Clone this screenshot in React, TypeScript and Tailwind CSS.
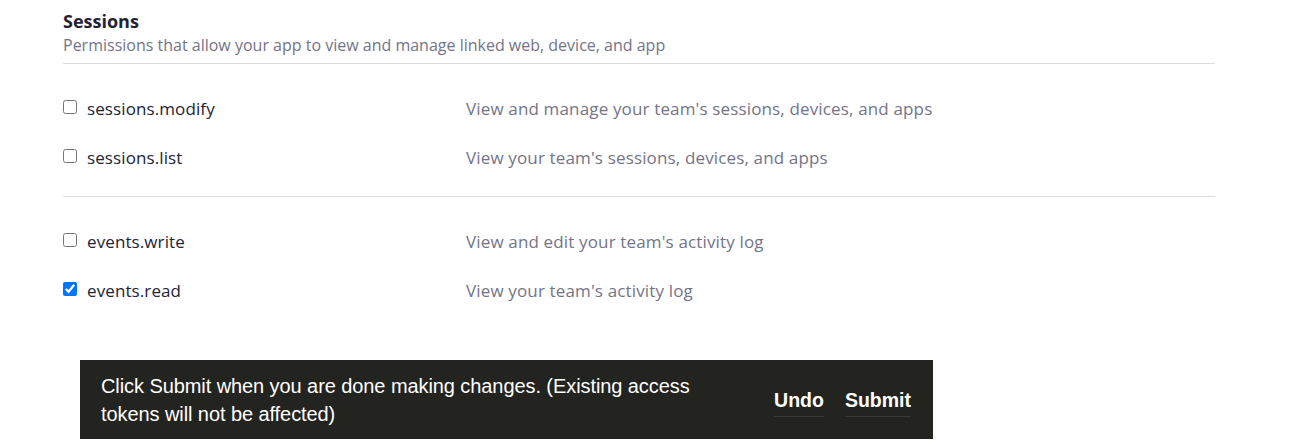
import React, { useState } from "react";

type Perm = { name: string; desc: string; checked: boolean };

const groups: Perm[][] = [
  [
    { name: "sessions.modify", desc: "View and manage your team's sessions, devices, and apps", checked: false },
    { name: "sessions.list", desc: "View your team's sessions, devices, and apps", checked: false },
  ],
  [
    { name: "events.write", desc: "View and edit your team's activity log", checked: false },
    { name: "events.read", desc: "View your team's activity log", checked: true },
  ],
];

function Row({ p }: { p: Perm }) {
  const [c, setC] = useState(p.checked);
  return (
    <div className="flex h-[49px] items-center">
      <label className="flex w-[403px] items-center">
        <input
          type="checkbox"
          checked={c}
          onChange={() => setC(!c)}
          className="mr-[10px] mb-[3px] h-[14px] w-[14px]"
        />
        <span className="text-[17px] tracking-[0.1px] text-[#232333]">{p.name}</span>
      </label>
      <span className="text-[17px] tracking-[0.15px] text-[#747487]">{p.desc}</span>
    </div>
  );
}

export default function App() {
  return (
    <div className="min-h-[448px] bg-white" style={{ fontFamily: '"Open Sans", sans-serif' }}>
      <div className="ml-[63px] w-[1152px] pt-[8px]">
        <div className="text-[18px] font-bold leading-[26px] text-[#232333]">Sessions</div>
        <div className="text-[16px] leading-[22px] text-[#747487]">
          Permissions that allow your app to view and manage linked web, device, and app
        </div>
        <div className="mt-[7px] h-px bg-[#dcdcdc]" />
        {groups.map((g, i) => (
          <div key={i}>
            <div className="pt-[20px] pb-[14px]">
              {g.map((p) => (
                <Row key={p.name} p={p} />
              ))}
            </div>
            {i === 0 && <div className="h-px bg-[#dcdcdc]" />}
          </div>
        ))}
      </div>
      <div
        className="mt-[31px] ml-[80px] flex h-[79px] w-[853px] items-center justify-between bg-[#232320] pr-[22px] pl-[21px] text-white"
        style={{ fontFamily: '"Liberation Sans", Arial, sans-serif' }}
      >
        <div className="w-[620px] text-[20px] leading-[28px] tracking-[-0.08px]">
          Click Submit when you are done making changes. (Existing access tokens will not be affected)
        </div>
        <div className="flex items-center gap-[21px]">
          <button className="border-b border-[#3d3838] pt-[7px] pb-[5px] text-[19.5px] font-bold leading-[22px] text-white">
            Undo
          </button>
          <button className="border-b border-[#3d3838] pt-[7px] pb-[5px] text-[19.5px] font-bold leading-[22px] text-white">
            Submit
          </button>
        </div>
      </div>
    </div>
  );
}
